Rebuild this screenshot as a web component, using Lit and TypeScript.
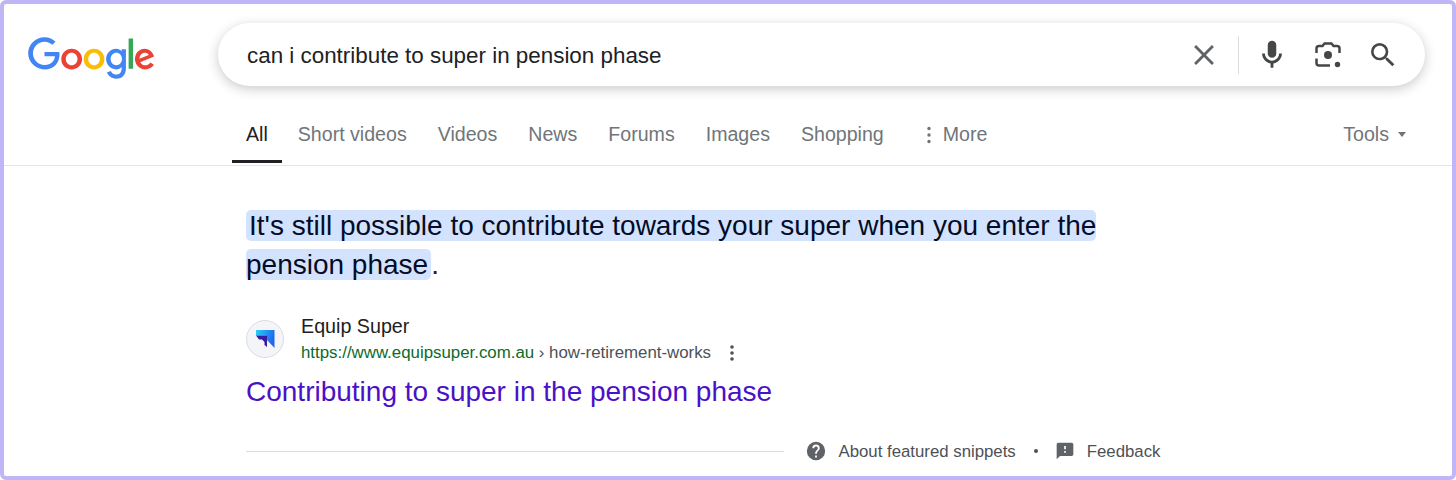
import { LitElement, css, html } from "lit";
import { customElement } from "lit/decorators.js";

const tabs = ["Short videos", "Videos", "News", "Forums", "Images", "Shopping"];

@customElement("app-root")
export class AppRoot extends LitElement {
  static styles = css`
    :host {
      display: block;
      width: 1456px;
      height: 480px;
      box-sizing: border-box;
      border: 4px solid #bfb6f6;
      border-radius: 6px;
      background: #fff;
      font-family: "Liberation Sans", Arial, sans-serif;
      color: #202124;
      overflow: hidden;
    }
    .top {
      display: flex;
      align-items: flex-start;
      padding: 19px 27px 0 24px;
    }
    .logo {
      width: 127px;
      height: 43px;
      flex: none;
      margin: 14px 63px 0 0;
    }
    .search {
      flex: 1;
      height: 63px;
      border-radius: 32px;
      background: #fff;
      box-shadow: 0 3px 12px rgba(32, 33, 36, 0.24);
      display: flex;
      align-items: center;
      padding: 0 26px 0 29px;
    }
    .query {
      flex: 1;
      font-size: 22.4px;
      padding-top: 2px;
      color: #202124;
    }
    .search svg {
      display: block;
      flex: none;
    }
    .sep {
      width: 1px;
      height: 38px;
      background: #dadce0;
      margin: 0 16px 0 17px;
    }
    .tabs {
      display: flex;
      height: 80px;
      box-sizing: border-box;
      padding-left: 228px;
      padding-right: 46px;
      border-bottom: 1px solid #e3e4e6;
      font-size: 19.6px;
      color: #70757a;
    }
    .tab {
      display: flex;
      align-items: center;
      height: 77px;
      box-sizing: border-box;
      margin-right: 31px;
      padding-top: 20px;
    }
    .tab.active {
      color: #202124;
      padding: 23px 14px 0;
      margin-right: 16px;
      border-bottom: 3px solid #202124;
    }
    .more {
      margin-left: 5px;
      gap: 5px;
    }
    .tools {
      margin: 0 0 0 auto;
      gap: 9px;
    }
    .caret {
      width: 0;
      height: 0;
      border: 4.5px solid transparent;
      border-top: 5px solid #70757a;
      border-bottom: 0;
    }
    main {
      padding: 40px 0 0 242px;
    }
    .snippet {
      font-size: 28px;
      line-height: 39px;
      color: #202124;
      white-space: nowrap;
    }
    .hl {
      background: #d3e3fd;
      color: #040c28;
      border-radius: 5px;
    }
    .hl.first {
      padding-left: 3px;
    }
    .hl.second {
      padding-right: 3px;
    }
    .site {
      display: flex;
      align-items: flex-start;
      margin-top: 29px;
    }
    .fav {
      width: 38px;
      height: 38px;
      box-sizing: border-box;
      border: 1px solid #dadce0;
      border-radius: 50%;
      background: #f3f5f8;
      display: flex;
      align-items: center;
      justify-content: center;
      margin: 7px 17px 0 0;
    }
    .name {
      font-size: 19.7px;
      line-height: 26px;
    }
    .url {
      display: flex;
      align-items: center;
      font-size: 16.85px;
      line-height: 26px;
      padding-top: 1px;
      color: #4d5156;
    }
    .url b {
      font-weight: 400;
      color: #0b6b2b;
    }
    .url svg {
      margin-left: 12px;
    }
    .title {
      margin-top: 8px;
      font-size: 28px;
      line-height: 36px;
      color: #4b11c6;
    }
    .foot {
      display: flex;
      align-items: center;
      margin-top: 30px;
      font-size: 16.8px;
      color: #4d5156;
    }
    .foot hr {
      width: 538px;
      flex: none;
      margin: 0 20.5px 0 0;
      border: 0;
      border-top: 1px solid #dadce0;
    }
    .foot svg {
      display: block;
      flex: none;
    }
    .foot .label {
      margin-left: 12px;
      padding-top: 2px;
      white-space: nowrap;
    }
    .dot {
      width: 4px;
      height: 4px;
      flex: none;
      border-radius: 50%;
      background: #4d5156;
      margin: 0 17px 0 18px;
    }
  `;

  render() {
    return html`
      <div class="top">
        <svg class="logo" viewBox="0 0 272 92">
          <path fill="#EA4335" d="M115.75 47.18c0 12.77-9.99 22.18-22.25 22.18s-22.25-9.41-22.25-22.18C71.25 34.32 81.24 25 93.5 25s22.25 9.32 22.25 22.18zm-9.74 0c0-7.98-5.79-13.44-12.51-13.44S80.99 39.2 80.99 47.18c0 7.9 5.79 13.44 12.51 13.44s12.51-5.55 12.51-13.44z"/>
          <path fill="#FBBC05" d="M163.75 47.18c0 12.77-9.99 22.18-22.25 22.18s-22.25-9.41-22.25-22.18c0-12.85 9.99-22.18 22.25-22.18s22.25 9.32 22.25 22.18zm-9.74 0c0-7.98-5.79-13.44-12.51-13.44s-12.51 5.46-12.51 13.44c0 7.9 5.79 13.44 12.51 13.44s12.51-5.55 12.51-13.44z"/>
          <path fill="#4285F4" d="M209.75 26.34v39.82c0 16.38-9.66 23.07-21.08 23.07-10.75 0-17.22-7.19-19.66-13.07l8.48-3.53c1.51 3.61 5.21 7.87 11.17 7.87 7.31 0 11.84-4.51 11.84-13v-3.19h-.34c-2.18 2.69-6.38 5.04-11.68 5.04-11.09 0-21.25-9.66-21.25-22.09 0-12.52 10.16-22.26 21.25-22.26 5.29 0 9.49 2.35 11.68 4.96h.34v-3.61h9.25zm-8.56 20.92c0-7.81-5.21-13.52-11.84-13.52-6.72 0-12.35 5.71-12.35 13.52 0 7.73 5.63 13.36 12.35 13.36 6.63 0 11.84-5.63 11.84-13.36z"/>
          <path fill="#34A853" d="M225 3v65h-9.5V3h9.5z"/>
          <path fill="#EA4335" d="M262.02 54.48l7.56 5.04c-2.44 3.61-8.32 9.83-18.48 9.83-12.6 0-22.01-9.74-22.01-22.18 0-13.19 9.49-22.18 20.92-22.18 11.51 0 17.14 9.16 18.98 14.11l1.01 2.52-29.65 12.28c2.27 4.45 5.8 6.72 10.75 6.72 4.96 0 8.4-2.44 10.92-6.14zm-23.27-7.98l19.82-8.23c-1.09-2.77-4.37-4.7-8.23-4.7-4.95 0-11.84 4.37-11.59 12.93z"/>
          <path fill="#4285F4" d="M35.29 41.41V32H67c.31 1.64.47 3.58.47 5.68 0 7.06-1.93 15.79-8.15 22.01-6.05 6.3-13.78 9.66-24.02 9.66C16.32 69.35.36 53.89.36 34.91.36 15.93 16.32.47 35.3.47c10.5 0 17.98 4.12 23.6 9.49l-6.64 6.64c-4.03-3.78-9.49-6.72-16.97-6.72-13.86 0-24.7 11.17-24.7 25.03 0 13.86 10.84 25.03 24.7 25.03 8.99 0 14.11-3.61 17.39-6.89 2.66-2.66 4.41-6.46 5.1-11.65l-22.49.01z"/>
        </svg>
        <div class="search">
          <div class="query">can i contribute to super in pension phase</div>
          <svg width="34" height="34" viewBox="0 0 24 24" fill="#5f6368">
            <path d="M19 6.41 17.59 5 12 10.59 6.41 5 5 6.41 10.59 12 5 17.59 6.41 19 12 13.41 17.59 19 19 17.59 13.41 12z"/>
          </svg>
          <div class="sep"></div>
          <svg width="34" height="34" viewBox="0 0 24 24" fill="#444746">
            <path d="M12 14c1.66 0 3-1.34 3-3V5c0-1.66-1.34-3-3-3S9 3.34 9 5v6c0 1.66 1.34 3 3 3z"/>
            <path d="M17 11c0 2.76-2.24 5-5 5s-5-2.24-5-5H5c0 3.53 2.61 6.43 6 6.92V21h2v-3.08c3.39-.49 6-3.39 6-6.92h-2z"/>
          </svg>
          <svg style="margin-left:23px" width="32" height="32" viewBox="0 0 32 32">
            <g fill="none" stroke="#444746" stroke-width="2.5">
              <path d="M4.5 14V9.5Q4.5 7 7 7H10.5L12.5 4.5H19.5L21.500 7H25Q27.500 7 27.500 9.500V14"/>
              <path d="M4.5 19.500V24Q4.500 26.500 7 26.500H18"/>
            </g>
            <circle cx="16" cy="16" r="4" fill="#444746"/>
            <circle cx="25.500" cy="25.500" r="2.700" fill="#444746"/>
          </svg>
          <svg style="margin-left:23px" width="32" height="32" viewBox="0 0 24 24" fill="#444746">
            <path d="M15.500 14h-.79l-.28-.27A6.471 6.471 0 0 0 16 9.500 6.500 6.500 0 1 0 9.500 16c1.610 0 3.090-.59 4.230-1.570l.27.28v.79l5 4.990L20.490 19l-4.990-5zm-6 0C7.010 14 5 11.990 5 9.500S7.010 5 9.500 5 14 7.010 14 9.500 11.990 14 9.500 14z"/>
          </svg>
        </div>
      </div>

      <nav class="tabs">
        <div class="tab active">All</div>
        ${tabs.map((t) => html`<div class="tab">${t}</div>`)}
        <div class="tab more">
          <svg width="18" height="18" viewBox="0 0 18 18" fill="#70757a">
            <circle cx="9" cy="2.500" r="1.700"/><circle cx="9" cy="9" r="1.700"/><circle cx="9" cy="15.500" r="1.700"/>
          </svg>
          More
        </div>
        <div class="tab tools">Tools <span class="caret"></span></div>
      </nav>

      <main>
        <div class="snippet">
          <span class="hl first">It's still possible to contribute towards your super when you enter the</span><br />
          <span class="hl second">pension phase</span>.
        </div>
        <div class="site">
          <div class="fav">
            <svg width="20" height="20" viewBox="0 0 20 20">
              <defs>
                <linearGradient id="fav-blue" x1="0" y1="0" x2="1" y2="0.300">
                  <stop offset="0" stop-color="#2bd0f7"/>
                  <stop offset="1" stop-color="#2166ee"/>
                </linearGradient>
              </defs>
              <path fill="url(#fav-blue)" d="M1 1H19.500V19L12 11V6.500H1z"/>
              <path fill="#3a1d9e" d="M1 6.500H12V18L9.500 16V13L7 10.500H4z"/>
            </svg>
          </div>
          <div>
            <div class="name">Equip Super</div>
            <div class="url">
              <b>https://www.equipsuper.com.au</b>&nbsp;› how-retirement-works
              <svg width="18" height="18" viewBox="0 0 18 18" fill="#4d5156">
                <circle cx="9" cy="3" r="1.800"/><circle cx="9" cy="9" r="1.800"/><circle cx="9" cy="15" r="1.800"/>
              </svg>
            </div>
          </div>
        </div>
        <div class="title">Contributing to super in the pension phase</div>
        <div class="foot">
          <hr />
          <svg width="22" height="22" viewBox="0 0 24 24" fill="#5f6368">
            <path d="M12 2a10 10 0 1 0 0 20 10 10 0 0 0 0-20zm1 17h-2v-2h2v2zm2.070-7.750-.9.920C13.450 12.900 13 13.500 13 15h-2v-.5c0-1.100.45-2.100 1.170-2.830l1.240-1.260A2 2 0 1 0 10 9H8a4 4 0 1 1 8 0c0 .88-.36 1.680-.93 2.250z"/>
          </svg>
          <span class="label">About featured snippets</span>
          <span class="dot"></span>
          <svg width="20" height="20" viewBox="0 0 24 24" fill="#5f6368">
            <path d="M20 2H4C2.900 2 2 2.900 2 4v18l4-4h14c1.100 0 2-.9 2-2V4c0-1.100-.9-2-2-2zm-7 12h-2v-2h2v2zm0-4h-2V6h2v4z"/>
          </svg>
          <span class="label">Feedback</span>
        </div>
      </main>
    `;
  }
}
